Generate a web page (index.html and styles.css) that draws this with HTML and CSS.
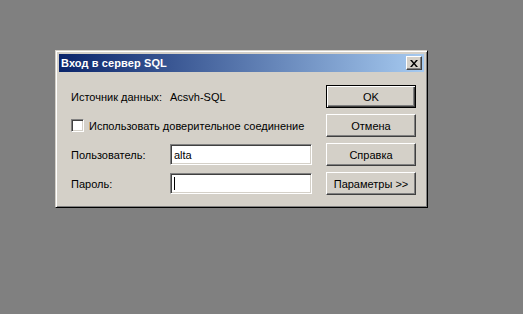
FILE: index.html
```html
<!DOCTYPE html>
<html lang="ru">
<head>
<meta charset="utf-8">
<title>Вход в сервер SQL</title>
<link rel="stylesheet" href="styles.css">
</head>
<body>
<div class="window">
  <div class="titlebar">
    <span class="title">Вход в сервер SQL</span>
    <button class="close" type="button" aria-label="Закрыть">
      <svg width="8" height="7" viewBox="0 0 8 7"><path d="M0 0h2l2 2.5L6 0h2L5 3.5 8 7H6L4 4.5 2 7H0l3-3.5z" fill="#000"/></svg>
    </button>
  </div>
  <div class="body">
    <span class="label">Источник данных:</span>
    <span class="value">Acsvh-SQL</span>
    <button class="btn default" type="button">OK</button>

    <label class="check"><span class="box"></span>Использовать доверительное соединение</label>
    <button class="btn" type="button">Отмена</button>

    <span class="label">Пользователь:</span>
    <div class="field">alta</div>
    <button class="btn" type="button">Справка</button>

    <span class="label">Пароль:</span>
    <div class="field"><span class="caret"></span></div>
    <button class="btn" type="button">Параметры &gt;&gt;</button>
  </div>
</div>
</body>
</html>
```

FILE: styles.css
```css
html, body {
  margin: 0;
  padding: 0;
  background: #808080;
  height: 100%;
}
body {
  font-family: "Liberation Sans", Arial, sans-serif;
  font-size: 11px;
  color: #000;
  padding: 50px 0 0 55px;
  box-sizing: border-box;
}
.window {
  width: 373px;
  height: 158px;
  box-sizing: border-box;
  background: #d4d0c8;
  border: 1px solid;
  border-color: #d4d0c8 #000 #000 #d4d0c8;
  box-shadow: inset 1px 1px #fff, inset -1px -1px #808080;
  padding: 3px;
  display: flex;
  flex-direction: column;
}
.titlebar {
  height: 18px;
  display: flex;
  align-items: center;
  justify-content: space-between;
  padding: 0 2px 0 2px;
  background: linear-gradient(to right, #0a246a, #a6caf0);
}
.title {
  color: #fff;
  font-weight: bold;
  font-size: 11px;
  letter-spacing: 0.1px;
}
.close {
  width: 16px;
  height: 14px;
  padding: 0;
  margin: 0;
  background: #d4d0c8;
  border: 1px solid;
  border-color: #fff #404040 #404040 #fff;
  box-shadow: inset -1px -1px #808080;
  display: flex;
  align-items: center;
  justify-content: center;
}
.close svg { display: block; margin-left: -1px; }
.body {
  flex: 1;
  display: grid;
  grid-template-columns: 99px 142px 104px;
  grid-template-rows: repeat(4, 23px);
  row-gap: 6px;
  padding: 13px 8px 0 12px;
  align-items: center;
}
.body .btn { margin-left: 14px; }
.label, .value { white-space: nowrap; }
.check {
  grid-column: 1 / 3;
  display: flex;
  align-items: center;
  gap: 5px;
  white-space: nowrap;
}
.box {
  width: 13px;
  height: 13px;
  box-sizing: border-box;
  background: #fff;
  border: 1px solid;
  border-color: #808080 #fff #fff #808080;
  box-shadow: inset 1px 1px #404040, inset -1px -1px #d4d0c8;
}
.field {
  height: 21px;
  box-sizing: border-box;
  background: #fff;
  border: 1px solid;
  border-color: #808080 #fff #fff #808080;
  box-shadow: inset 1px 1px #404040, inset -1px -1px #d4d0c8;
  padding: 0 3px;
  display: flex;
  align-items: center;
}
.caret {
  width: 1px;
  height: 13px;
  background: #000;
}
.btn {
  width: 90px;
  height: 23px;
  box-sizing: border-box;
  font-family: "Liberation Sans", Arial, sans-serif;
  font-size: 11px;
  color: #000;
  background: #d4d0c8;
  border: 1px solid;
  border-color: #fff #404040 #404040 #fff;
  box-shadow: inset -1px -1px #808080;
  padding: 0;
}
.btn.default {
  border-color: #000;
  box-shadow: inset 1px 1px #fff, inset -1px -1px #404040, inset -2px -2px #808080;
}
```
